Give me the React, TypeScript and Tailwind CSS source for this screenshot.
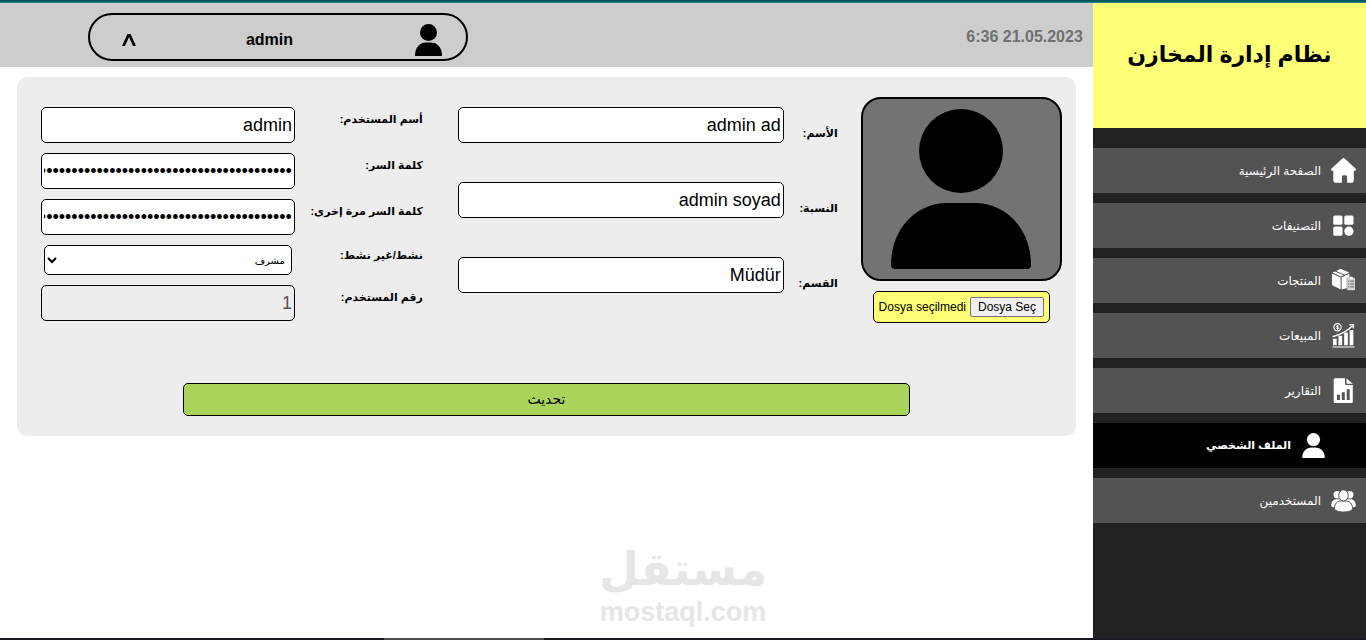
import React, { useRef, useState } from 'react';

const HomeIcon = () => (
  <svg viewBox="0 0 25 25" className="size-[25px]" fill="white">
    <path d="M11.2.7a2 2 0 0 1 2.7 0l10.6 9.9c.9.9.4 2.2-.8 2.2h-.9v9.4c0 1.6-1 2.6-2.6 2.6h-4.1v-5.6c0-1.3-.6-2-1.8-2h-1.6c-1.2 0-1.8.7-1.8 2v5.6H5c-1.6 0-2.7-1-2.7-2.6v-9.4h-1c-1.2 0-1.7-1.3-.8-2.2z" />
  </svg>
);

const CategoriesIcon = () => (
  <svg viewBox="0 0 25 25" className="size-[25px]" fill="white">
    <rect x="2.3" y="2.6" width="9.2" height="9.2" rx="1.6" />
    <rect x="13.3" y="2.6" width="9.2" height="9.2" rx="1.6" />
    <rect x="2.3" y="13.6" width="9.2" height="9.2" rx="1.6" />
    <circle cx="17.9" cy="18.2" r="4.6" />
  </svg>
);

const ProductsIcon = () => (
  <svg viewBox="0 0 25 25" className="size-[25px]">
    <path
      fill="white"
      d="M1 5.6 9.6 9.4v11.8L1.6 17.4 1 16.6zM10.6 9.4 18.4 5.6v4.2h-2.6v10.4l-5.2 1.2zM1.4 4.6 4 3.4l8.5 3.9-2.4 1.1zM5.2 2.9l4.3-2.1 8.7 3.8-4.4 2.1z"
    />
    <rect x="16.2" y="9.8" width="7.8" height="12.4" rx="1" fill="#d8d8d8" />
    <rect x="18.4" y="8.8" width="3.4" height="2" rx=".6" fill="white" />
    <path stroke="#535353" strokeDasharray="1.2 .8 4 9" d="M17.2 13.2h6M17.2 16h6M17.2 18.8h6" />
  </svg>
);

const SalesIcon = () => (
  <svg viewBox="0 0 25 25" className="size-[25px]" fill="none" stroke="white">
    <circle cx="6.5" cy="4.2" r="3.6" strokeWidth="1.2" />
    <path d="M7.8 3.2c-.6-.8-2.4-.6-2.4.3 0 1.2 2.5.5 2.5 1.8 0 1-1.9 1.1-2.6.2M6.5 2v4.6" />
    <path strokeWidth="1.2" d="M1.6 13.6C9 12 16 8.2 21.6 2.8M18.4 2.2l4.1-.8-.4 4" />
    <path strokeWidth="3.7" d="M3.8 15.8v6.4M9.3 12.8v9.4M15 9.6v12.6M20.5 7v15.2" />
    <path strokeWidth="1.4" stroke="#d0d5d8" d="M1.5 24h22" />
  </svg>
);

const ReportsIcon = () => (
  <svg viewBox="0 0 25 25" className="size-[25px]">
    <path
      fill="white"
      d="M4.2.2H14v5.4c0 1 .5 1.5 1.5 1.5h6.3v16.3c0 1-.6 1.5-1.5 1.5H4.2c-1 0-1.5-.5-1.5-1.5V1.7c0-1 .5-1.5 1.5-1.5z"
    />
    <path fill="white" d="m15.5.4 6.3 5.4h-6.3z" />
    <path stroke="#535353" strokeWidth="3" d="M7.5 16.8V22M12.3 14.3V22M17.2 11.3V22" />
  </svg>
);

const PersonIcon = () => (
  <svg viewBox="0 0 25 25" className="size-[25px]" fill="white">
    <circle cx="12.5" cy="6.6" r="6.6" />
    <path d="M1.2 25c0-6.7 4.3-10.6 9.5-10.6h3.6c5.2 0 9.5 3.9 9.5 10.6z" />
  </svg>
);

const UsersIcon = () => (
  <svg viewBox="0 0 25 25" className="size-[25px]" fill="white">
    <circle cx="6.2" cy="6.8" r="3.7" />
    <circle cx="18.8" cy="6.8" r="3.7" />
    <path d="M.2 17.5c0-4 2.2-6.3 5.4-6.3h13.8c3.2 0 5.4 2.3 5.4 6.3 0 1.2-1.5 2-3.6 2H3.8c-2.1 0-3.6-.8-3.6-2z" />
    <g stroke="#535353">
      <path d="M3.5 20.5c0-5 2.9-7.5 6.3-7.5h5.4c3.4 0 6.3 2.5 6.3 7.5 0 2.2-4 3.5-9 3.5s-9-1.3-9-3.5z" />
      <ellipse cx="12.5" cy="7.4" rx="4.7" ry="5.6" />
    </g>
  </svg>
);

const menu = [
  { label: 'الصفحة الرئيسية', Icon: HomeIcon },
  { label: 'التصنيفات', Icon: CategoriesIcon },
  { label: 'المنتجات', Icon: ProductsIcon },
  { label: 'المبيعات', Icon: SalesIcon },
  { label: 'التقارير', Icon: ReportsIcon },
  { label: 'الملف الشخصي', Icon: PersonIcon, active: true },
  { label: 'المستخدمين', Icon: UsersIcon },
];

const names = [
  { id: 'name', label: 'الأسم:', value: 'admin ad' },
  { id: 'surname', label: 'النسبة:', value: 'admin soyad' },
  { id: 'department', label: 'القسم:', value: 'Müdür' },
];

const inputClass =
  'h-9 min-w-0 flex-1 rounded-[5px] border border-black bg-white px-0.5 text-right text-lg text-black disabled:bg-[#ededed] disabled:text-[#545454]';
const labelClass = 'shrink-0 whitespace-nowrap text-[11px] font-bold';

function Sidebar() {
  return (
    <aside className="w-1/5 bg-[#222222]">
      <div className="h-[125px] bg-[#ffff77] pt-8 text-center">
        <h1 className="text-[22px] leading-10 font-bold">نظام إدارة المخازن</h1>
      </div>
      <nav className="flex flex-col gap-2.5 pt-5">
        {menu.map(({ label, Icon, active }) => (
          <a
            key={label}
            href="#"
            className={
              active
                ? 'flex h-[45px] items-center gap-2.5 bg-black ps-10 text-[11px] font-bold text-white'
                : 'flex h-[45px] items-center gap-2.5 bg-[#535353] ps-2.5 text-[12px] text-white'
            }
          >
            <Icon />
            <span>{label}</span>
          </a>
        ))}
      </nav>
    </aside>
  );
}

function Header() {
  return (
    <header className="flex h-16 items-center justify-between bg-[#cdcdcd] ps-2.5 pe-[88px]">
      <time dir="ltr" className="pt-1 font-bold text-[#707070]">6:36 21.05.2023</time>
      <button
        type="button"
        className="mt-1 grid h-12 w-[380px] grid-cols-[27px_1fr_14px] items-center rounded-full border-2 border-black ps-6 pe-8 pt-1.5 font-bold"
      >
        <svg viewBox="0 0 27 32" className="h-8 w-[27px]" fill="black">
          <circle cx="13.5" cy="8.5" r="8.5" />
          <path d="M0 32c0-9 5-13.5 11-13.5h5c6 0 11 4.5 11 13.5z" />
        </svg>
        <span className="ps-3">admin</span>
        <svg viewBox="0 0 14 12" className="h-3 w-3.5" fill="black">
          <path d="M0 12 5.400 0h3.200L14 12h-3L7 3l-4 9z" />
        </svg>
      </button>
    </header>
  );
}

function Avatar() {
  const fileRef = useRef<HTMLInputElement>(null);
  const [fileName, setFileName] = useState('Dosya seçilmedi');

  return (
    <div className="flex flex-col items-center gap-2.5">
      <div className="h-[184px] w-full rounded-[20px] border-2 border-black bg-[#737373] pt-2.5">
        <svg viewBox="0 0 140 160" className="mx-auto h-40 w-[140px]" fill="black">
          <circle cx="70" cy="42" r="42" />
          <path d="M0 156c0-36 25-62 56-62h28c31 0 56 26 56 62q0 4-4 4H4q-4 0-4-4z" />
        </svg>
      </div>
      <div className="flex h-8 items-center gap-1 rounded-[5px] border border-black bg-[#ffff77] px-[5px] text-[12px]">
        <input
          ref={fileRef}
          type="file"
          aria-label="Dosya Seç"
          className="hidden"
          onChange={(e) => setFileName(e.target.files?.[0]?.name ?? 'Dosya seçilmedi')}
        />
        <button
          type="button"
          onClick={() => fileRef.current?.click()}
          className="h-5 rounded-[2px] border border-[#767676] bg-[#efefef] px-[7px] leading-4"
        >
          Dosya Seç
        </button>
        <span>{fileName}</span>
      </div>
    </div>
  );
}

function ProfileForm() {
  return (
    <form className="mx-[17px] mt-2.5 rounded-[10px] bg-[#ededed] py-5" onSubmit={(e) => e.preventDefault()}>
      <div className="grid grid-cols-[201px_380fr_394fr] gap-x-[23px] ps-3.5 pe-6">
        <Avatar />

        <div className="flex flex-col gap-[39px] pt-2.5">
          {names.map((field) => (
            <div key={field.id} className="flex items-start">
              <label htmlFor={field.id} className={`${labelClass} w-[54px] pt-4 leading-5`}>
                {field.label}
              </label>
              <input id={field.id} type="text" dir="ltr" defaultValue={field.value} className={inputClass} />
            </div>
          ))}
        </div>

        <div className="flex flex-col gap-2.5 ps-3 pt-2.5">
          <div className="flex items-start">
            <label htmlFor="username" className={`${labelClass} w-32 leading-6`}>أسم المستخدم:</label>
            <input id="username" type="text" dir="ltr" defaultValue="admin" className={inputClass} />
          </div>
          <div className="flex items-start">
            <label htmlFor="password" className={`${labelClass} w-32 leading-6`}>كلمة السر:</label>
            <input id="password" type="password" defaultValue={'x'.repeat(60)} className={inputClass} />
          </div>
          <div className="flex items-start">
            <label htmlFor="password2" className={`${labelClass} w-32 leading-6`}>كلمة السر مرة إخرى:</label>
            <input id="password2" type="password" defaultValue={'x'.repeat(60)} className={inputClass} />
          </div>
          <div className="flex items-start">
            <label htmlFor="role" className={`${labelClass} w-32 leading-5`}>نشط/غير نشط:</label>
            <select
              id="role"
              className="mx-[3px] h-[30px] min-w-0 flex-1 rounded-[5px] border border-black bg-white px-0.5 text-[10px]"
            >
              <option>مشرف</option>
            </select>
          </div>
          <div className="flex items-start">
            <label htmlFor="userno" className={`${labelClass} w-32 leading-6`}>رقم المستخدم:</label>
            <input id="userno" type="text" defaultValue="1" disabled className={inputClass} />
          </div>
        </div>
      </div>

      <div className="px-[166px] pt-[60px]">
        <button
          type="submit"
          className="h-[33px] w-full rounded-[5px] border border-black bg-[#a9d35b] text-[14px]"
        >
          تحديث
        </button>
      </div>
    </form>
  );
}

export default function App() {
  return (
    <div
      dir="rtl"
      className="relative flex min-h-screen flex-col bg-white font-['Liberation_Sans','DejaVu_Sans',sans-serif] text-base text-black"
    >
      <div className="h-[3px] border-b border-[#2f7f86] bg-[#005a64]" />
      <div className="flex flex-1">
        <Sidebar />
        <main className="flex-1">
          <Header />
          <ProfileForm />
        </main>
      </div>
      <div className="h-0.5 bg-[#1a1b22] pe-96">
        <div className="ms-auto h-full w-40 bg-[#4d4d4d]" />
      </div>

      <div className="pointer-events-none absolute inset-x-0 bottom-3 text-center font-bold text-[#e6e6e6]">
        <div className="text-[46px] leading-[54px]">مستقل</div>
        <div className="text-[27px] leading-8">mostaql.com</div>
      </div>
    </div>
  );
}
